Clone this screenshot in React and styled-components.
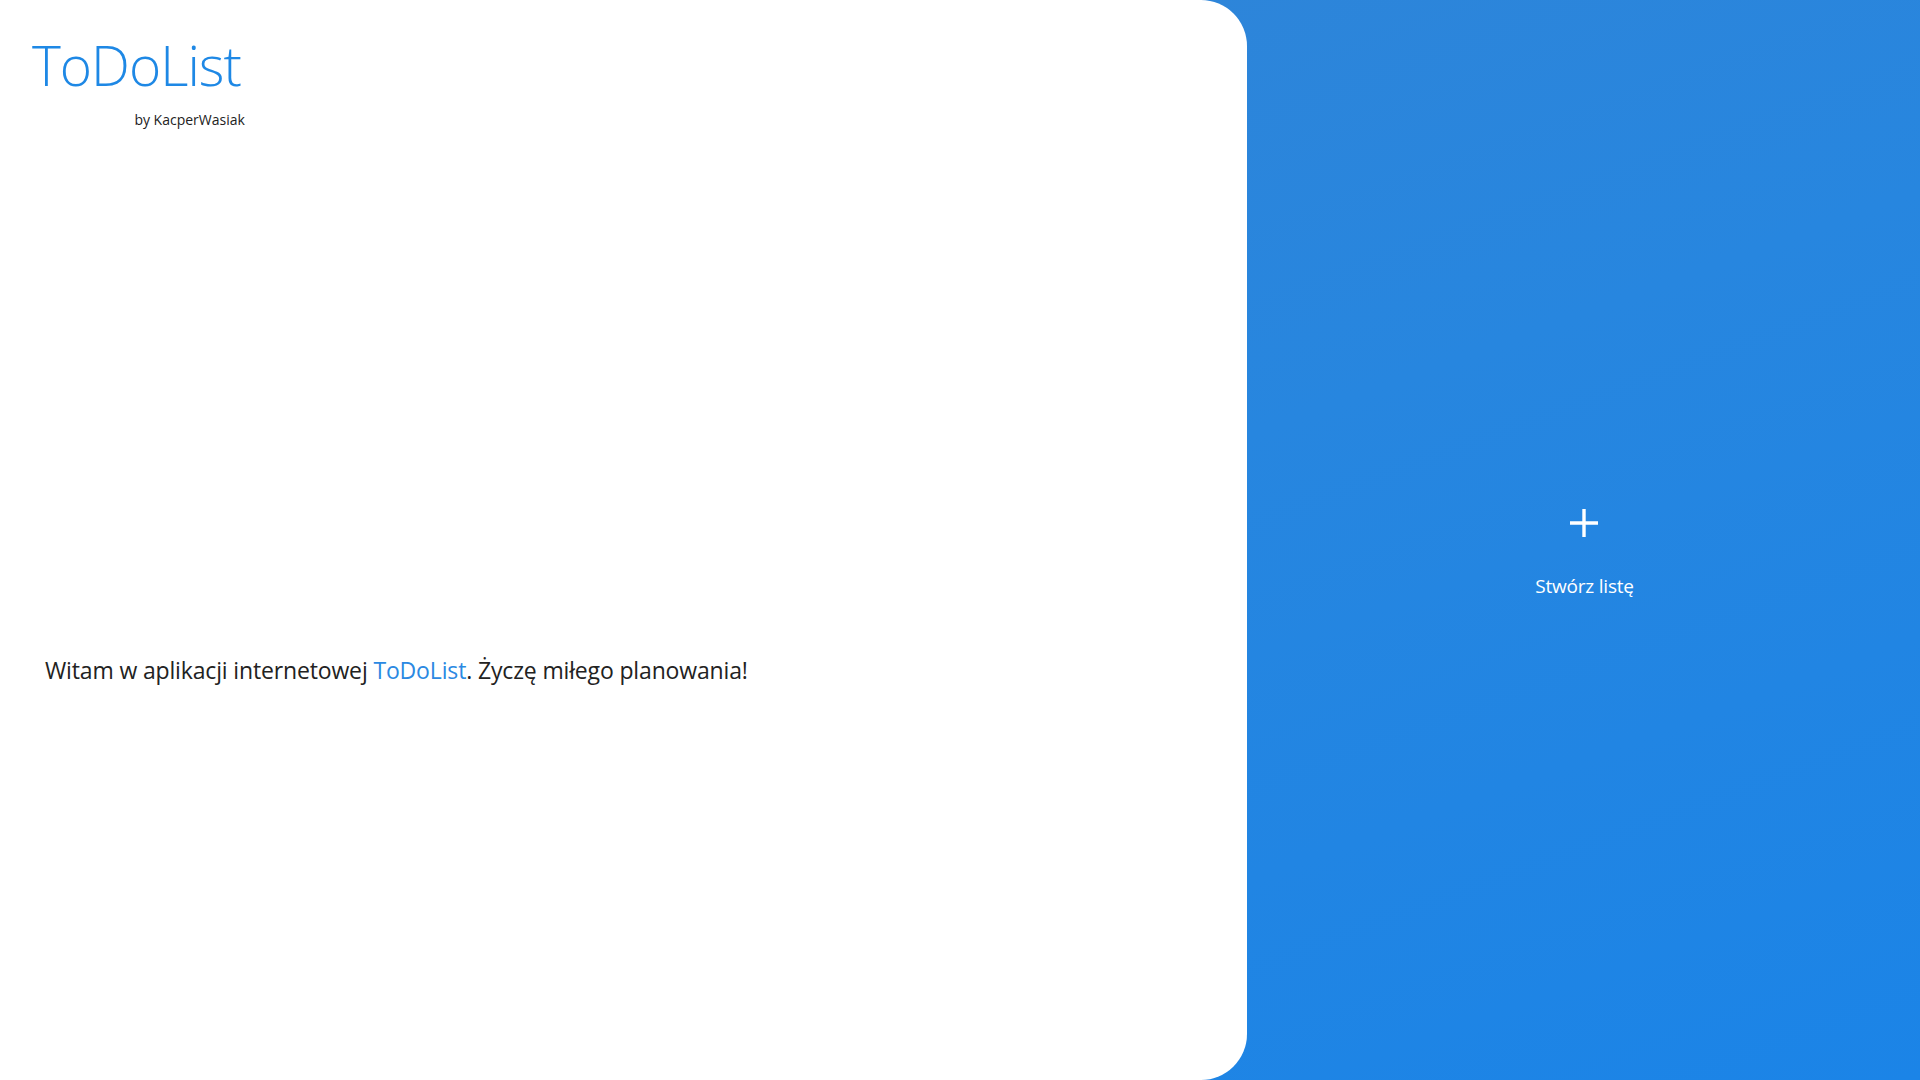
import React from 'react'
import styled, { createGlobalStyle } from 'styled-components'

const GlobalStyle = createGlobalStyle`
    html, body {
        margin: 0;
        padding: 0;
        height: 100%;
    }
    body {
        font-family: "Open Sans", "Noto Sans", sans-serif;
        color: #222;
    }
    #root {
        height: 100%;
    }
`;

const Page = styled.div`
    display: flex;
    height: 100vh;
    background: linear-gradient(160deg, #3384d4 0%, #2786df 50%, #1b84e7 100%);
`;

const Sidebar = styled.div`
    width: 1247px;
    flex-shrink: 0;
    background-color: #ffffff;
    border-radius: 0 46px 46px 0;
    display: flex;
    flex-direction: column;
    padding: 35px 0 0 32px;
    box-sizing: border-box;
`;

const Brand = styled.div`
    display: inline-flex;
    flex-direction: column;
    align-items: flex-end;
    align-self: flex-start;
`;

const Logo = styled.h1`
    margin: 0;
    font-size: 55px;
    font-weight: 300;
    line-height: 1.1;
    color: #1e88e5;
    letter-spacing: -1px;
`;

const Author = styled.span`
    font-size: 14px;
    color: #222;
    margin-top: 14px;
    margin-right: -4px;
`;

const Welcome = styled.p`
    margin: 525px 0 0 13px;
    font-size: 23px;
    color: #222;
    letter-spacing: -0.15px;

    span {
        color: #2b89e2;
    }
`;

const Workspace = styled.div`
    flex: 1;
    display: flex;
    align-items: center;
    justify-content: center;
`;

const CreateButton = styled.button`
    display: flex;
    flex-direction: column;
    align-items: center;
    gap: 35px;
    background: none;
    border: none;
    cursor: pointer;
    color: #fff;
    font-family: inherit;
    margin-top: 26px;
    margin-left: 2px;

    .icon {
        width: 30px;
        height: 30px;
    }
`;

const CreateLabel = styled.span`
    font-size: 19px;
    letter-spacing: -0.2px;
`;

function App() {
    return (
        <>
            <GlobalStyle />
            <Page>
                <Sidebar>
                    <Brand>
                        <Logo>ToDoList</Logo>
                        <Author>by KacperWasiak</Author>
                    </Brand>
                    <Welcome>
                        Witam w aplikacji internetowej <span>ToDoList</span>. Życzę miłego planowania!
                    </Welcome>
                </Sidebar>
                <Workspace>
                    <CreateButton>
                        <svg className='icon' viewBox='0 0 30 30'>
                            <path d='M15 1v28M1 15h28' stroke='#fff' strokeWidth='3.4' fill='none' />
                        </svg>
                        <CreateLabel>Stwórz listę</CreateLabel>
                    </CreateButton>
                </Workspace>
            </Page>
        </>
    )
}

export default App
